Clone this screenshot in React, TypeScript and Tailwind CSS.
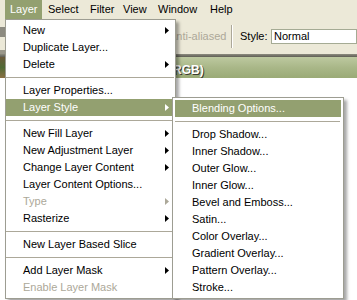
import React from 'react'
import clsx from 'clsx'

type Item = { label: string; sub?: boolean; disabled?: boolean; active?: boolean } | 'sep'

const layerItems: Item[] = [
  { label: 'New', sub: true },
  { label: 'Duplicate Layer...' },
  { label: 'Delete', sub: true },
  'sep',
  { label: 'Layer Properties...' },
  { label: 'Layer Style', sub: true, active: true },
  'sep',
  { label: 'New Fill Layer', sub: true },
  { label: 'New Adjustment Layer', sub: true },
  { label: 'Change Layer Content', sub: true },
  { label: 'Layer Content Options...' },
  { label: 'Type', sub: true, disabled: true },
  { label: 'Rasterize', sub: true },
  'sep',
  { label: 'New Layer Based Slice' },
  'sep',
  { label: 'Add Layer Mask', sub: true },
  { label: 'Enable Layer Mask', disabled: true },
]

const styleItems: Item[] = [
  { label: 'Blending Options...', active: true },
  'sep',
  { label: 'Drop Shadow...' },
  { label: 'Inner Shadow...' },
  { label: 'Outer Glow...' },
  { label: 'Inner Glow...' },
  { label: 'Bevel and Emboss...' },
  { label: 'Satin...' },
  { label: 'Color Overlay...' },
  { label: 'Gradient Overlay...' },
  { label: 'Pattern Overlay...' },
  { label: 'Stroke...' },
]

const topMenus = [
  { label: 'Layer', w: 'w-[37px] pl-[5px] bg-[#93a070] text-white' },
  { label: 'Select', w: 'w-[42px] pl-[6px]' },
  { label: 'Filter', w: 'w-[33px] pl-[6px]' },
  { label: 'View', w: 'w-[35px] pl-[6px]' },
  { label: 'Window', w: 'w-[52px] pl-[6px]' },
  { label: 'Help', w: 'w-[36px] pl-[6px]' },
]

const Arrow = ({ color }: { color: string }) => (
  <svg width="4" height="7" viewBox="0 0 4 7" className="shrink-0">
    <path d="M0 0L4 3.5L0 7Z" fill={color} />
  </svg>
)

const MenuList = ({ items }: { items: Item[] }) => (
  <>
    {items.map((it, i) =>
      it === 'sep' ? (
        <div key={i} className="flex h-[9px] items-center pr-[1px]">
          <div className="h-px w-full bg-[#aca899]" />
        </div>
      ) : (
        <div
          key={i}
          className={clsx(
            'flex h-[17px] items-center justify-between pl-[17px] pr-[6px] whitespace-nowrap',
            it.active && 'bg-[#93a070] text-white',
            it.disabled && 'text-[#aca899]'
          )}
        >
          <span>{it.label}</span>
          {it.sub && <Arrow color={it.active ? '#ffffff' : it.disabled ? '#aca899' : '#000000'} />}
        </div>
      )
    )}
  </>
)

export default function App() {
  return (
    <div className="relative w-[357px] h-[300px] overflow-hidden bg-white font-['Liberation_Sans',Arial,sans-serif] text-[11px] leading-none text-black">
      {/* menu bar */}
      <div className="flex h-[19px] bg-[#ece9d8] pl-[5px]">
        {topMenus.map((m) => (
          <div key={m.label} className={clsx('flex h-full items-center', m.w)}>
            {m.label}
          </div>
        ))}
      </div>

      {/* options bar */}
      <div className="flex h-[35px] items-center bg-[#ece9d8]">
        <div className="flex h-full w-[5px] flex-col">
          <div className="h-[8px] bg-[#ece9d8]" />
          <div className="h-[10px] bg-[#8c8a80]" />
          <div className="h-[13px] bg-[#ece9d8]" />
          <div className="h-[4px] bg-[#9a978a]" />
        </div>
        <span className="ml-[164px] w-[62px] text-[#aca899]">Anti-aliased</span>
        <div className="flex h-[23px] w-[2px]">
          <div className="w-px bg-[#aca899]" />
          <div className="w-px bg-white" />
        </div>
        <span className="ml-[7px] w-[31px]">Style:</span>
        <div className="flex h-[15px] flex-1 items-center border border-[#a5ab94] bg-white pl-[2px]">Normal</div>
      </div>

      <div className="h-[3px] bg-gradient-to-b from-[#8d8c80] to-[#5f5e55]" />

      {/* document title bar */}
      <div className="flex h-[21px] items-end bg-gradient-to-b from-[#bdc9a0] via-[#a9b788] to-[#9aaa76]">
        <div className="h-full w-[5px] bg-gradient-to-b from-[#6b5a3a] via-[#4f6a35] to-[#8a6f42]" />
        <span className="ml-[164px] pb-[2px] text-[12px] font-bold text-white [text-shadow:1px_1px_0_#3a3a30]">
          (RGB)
        </span>
      </div>

      {/* Layer menu */}
      <div className="absolute left-[5px] top-[19px] z-10 w-[171px] h-[280px] border border-[#9d9d92] bg-white py-[2px] shadow-[3px_3px_3px_rgba(0,0,0,0.35)]">
        <MenuList items={layerItems} />
      </div>

      {/* Layer Style submenu */}
      <div className="absolute left-[172px] top-[97px] z-20 w-[172px] h-[202px] border border-[#9d9d92] bg-white px-[2px] py-[2px] shadow-[3px_3px_3px_rgba(0,0,0,0.35)]">
        <MenuList items={styleItems} />
      </div>
    </div>
  )
}
